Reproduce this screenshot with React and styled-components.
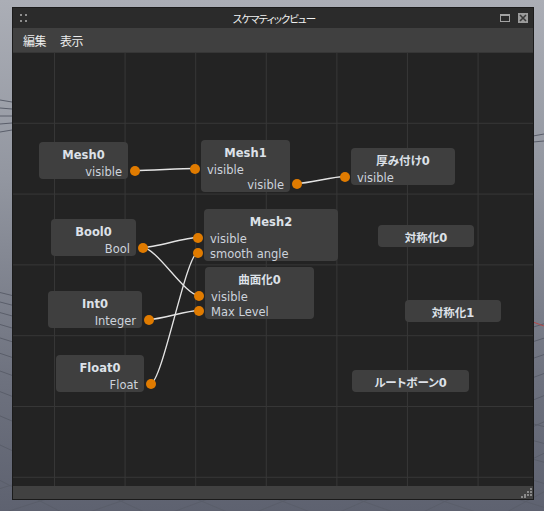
import React from 'react';
import styled, { createGlobalStyle } from 'styled-components';

const GlobalStyle = createGlobalStyle`
  html, body {
    margin: 0;
    padding: 0;
    background: #7d818c;
  }
  body {
    font-family: "DejaVu Sans", "Noto Sans CJK JP", sans-serif;
    font-feature-settings: "palt";
  }
`;

const Stage = styled.div`
  position: relative;
  width: 544px;
  height: 511px;
  overflow: hidden;
  box-sizing: border-box;
  padding: 7px 0 0 12px;
  background: linear-gradient(#abaeb6 0%, #9296a0 35%, #6d717e 75%, #5e6270 100%);
`;

const Backdrop = styled.svg`
  position: absolute;
  inset: 0;
  width: 544px;
  height: 511px;
`;

const Window = styled.div`
  position: relative;
  width: 522px;
  height: 493px;
  box-sizing: border-box;
  border: 1px solid #1b1b1b;
  display: flex;
  flex-direction: column;
  background: #2a2a2a;
`;

const TitleBar = styled.div`
  height: 20px;
  flex: none;
  display: grid;
  grid-template-columns: 1fr auto 1fr;
  align-items: center;
  padding: 0 5px 0 7px;
  background: #2b2b2b;
  color: #f2f2f2;
  font-family: "Noto Sans CJK JP", sans-serif;
  font-size: 10.5px;
`;

const Grip = styled.div`
  display: grid;
  grid-template-columns: 2px 2px;
  gap: 4px 3px;
  & > span {
    width: 2px;
    height: 2px;
    background: #8e8e8e;
  }
`;

const TitleText = styled.div`
  letter-spacing: -1px;
`;

const WinButtons = styled.div`
  justify-self: end;
  display: flex;
  align-items: center;
  gap: 8px;
`;

const MaxButton = styled.div`
  width: 10px;
  height: 8px;
  box-sizing: border-box;
  border: 1px solid #a3a3a3;
  border-top-width: 2px;
`;

const CloseButton = styled.div`
  width: 10px;
  height: 10px;
  background: #9b9b9b;
  display: flex;
  align-items: center;
  justify-content: center;
`;

const MenuBar = styled.div`
  height: 24px;
  flex: none;
  display: flex;
  align-items: center;
  gap: 14px;
  padding-left: 10px;
  background: #404040;
  color: #ececec;
  font-family: "Noto Sans CJK JP", sans-serif;
  font-size: 12px;
`;

const MenuItem = styled.span`
  letter-spacing: -0.5px;
`;

const Canvas = styled.div`
  position: relative;
  flex: 1;
  overflow: hidden;
  background-color: #232323;
  background-image:
    linear-gradient(to right, #363636 1px, transparent 1px),
    linear-gradient(to bottom, #363636 1px, transparent 1px);
  background-size: 70.6px 70.8px;
  background-position: 41px 0px;
`;

const Wires = styled.svg`
  position: absolute;
  inset: 0;
  width: 100%;
  height: 100%;
`;

const Node = styled.div`
  position: absolute;
  box-sizing: border-box;
  padding: 3px 0 1px;
  border-radius: 4px;
  background: #3f3f3f;
`;

const NodeTitle = styled.div`
  height: 18px;
  line-height: 20px;
  text-align: center;
  font-size: 11.5px;
  font-weight: 700;
  color: #dde1e8;
  white-space: nowrap;
`;

const Row = styled.div`
  position: relative;
  height: 15px;
  line-height: 19px;
  padding: 0 6px;
  font-size: 11.5px;
  color: #cdd3dc;
  white-space: nowrap;
  text-align: ${(p) => (p.$side === 'out' ? 'right' : 'left')};
`;

const Port = styled.span`
  position: absolute;
  top: 50%;
  margin-top: -5px;
  width: 10px;
  height: 10px;
  border-radius: 50%;
  background: #e07b00;
  ${(p) => (p.$side === 'out' ? 'right: -11.5px;' : 'left: -11px;')}
`;

const StatusBar = styled.div`
  height: 12px;
  flex: none;
  display: flex;
  justify-content: flex-end;
  align-items: flex-end;
  background: #414141;
  padding: 0 1px 1px 0;
`;

const nodes = [
  { id: 'mesh0', title: 'Mesh0', x: 26, y: 90, w: 89, rows: [['out', 'visible']] },
  { id: 'mesh1', title: 'Mesh1', x: 188, y: 88, w: 89, rows: [['in', 'visible'], ['out', 'visible']] },
  { id: 'atsumi', title: '厚み付け0', x: 338, y: 96, w: 104, rows: [['in', 'visible']] },
  { id: 'bool0', title: 'Bool0', x: 38, y: 167, w: 85, rows: [['out', 'Bool']] },
  { id: 'mesh2', title: 'Mesh2', x: 191, y: 157, w: 134, rows: [['in', 'visible'], ['in', 'smooth angle']] },
  { id: 'taisho0', title: '対称化0', x: 365, y: 173, w: 96, rows: [] },
  { id: 'kyokumen', title: '曲面化0', x: 192, y: 215, w: 109, rows: [['in', 'visible'], ['in', 'Max Level']] },
  { id: 'int0', title: 'Int0', x: 35, y: 239, w: 94, rows: [['out', 'Integer']] },
  { id: 'taisho1', title: '対称化1', x: 392, y: 248, w: 96, rows: [] },
  { id: 'float0', title: 'Float0', x: 43, y: 303, w: 88, rows: [['out', 'Float']] },
  { id: 'root', title: 'ルートボーン0', x: 339, y: 318, w: 117, rows: [] },
];

const links = [
  ['mesh0', 0, 'mesh1', 0],
  ['mesh1', 1, 'atsumi', 0],
  ['bool0', 0, 'mesh2', 0],
  ['bool0', 0, 'kyokumen', 0],
  ['int0', 0, 'kyokumen', 1],
  ['float0', 0, 'mesh2', 1],
];

const byId = Object.fromEntries(nodes.map((n) => [n.id, n]));

function portPos(id, row) {
  const n = byId[id];
  const side = n.rows[row][0];
  return {
    x: side === 'out' ? n.x + n.w + 6.5 : n.x - 6,
    y: n.y + 3 + 18 + 15 * row + 7.5,
  };
}

function wirePath([a, ai, b, bi]) {
  const p = portPos(a, ai);
  const q = portPos(b, bi);
  const h = Math.abs(q.x - p.x) * 0.25;
  return `M${p.x} ${p.y} C${p.x + h} ${p.y} ${q.x - h} ${q.y} ${q.x} ${q.y}`;
}

function Floor() {
  const lines = [];
  const vl = [-700, 120];
  const vr = [1250, 110];
  for (let i = 0; i < 12; i++) {
    const bx = -300 + i * 110;
    lines.push(<line key={'l' + i} x1={vl[0]} y1={vl[1]} x2={bx + 500} y2={640} />);
    lines.push(<line key={'r' + i} x1={vr[0]} y1={vr[1]} x2={bx - 200} y2={640} />);
  }
  return (
    <Backdrop viewBox="0 0 544 511">
      <g stroke="#5a5e6a" strokeWidth="1" fill="none">
        {lines}
        <path d="M0 100L12 102M0 108L12 109M0 116L12 116M0 124L12 123M0 132L12 130M533 136L544 134M533 142L544 141" />
      </g>
      <line x1="533" y1="322" x2="544" y2="326" stroke="#b04848" strokeWidth="1" />
    </Backdrop>
  );
}

export default function App() {
  return (
    <Stage>
      <GlobalStyle />
      <Floor />
      <Window>
        <TitleBar>
          <Grip>
            <span />
            <span />
            <span />
            <span />
          </Grip>
          <TitleText>スケマティックビュー</TitleText>
          <WinButtons>
            <MaxButton />
            <CloseButton>
              <svg width="8" height="8" viewBox="0 0 8 8">
                <path d="M1 1L7 7M7 1L1 7" stroke="#3a3a3a" strokeWidth="1.6" />
              </svg>
            </CloseButton>
          </WinButtons>
        </TitleBar>
        <MenuBar>
          <MenuItem>編集</MenuItem>
          <MenuItem>表示</MenuItem>
        </MenuBar>
        <Canvas>
          <Wires>
            {links.map((l, i) => (
              <path key={i} d={wirePath(l)} stroke="#e4e4e4" strokeWidth="1.3" fill="none" />
            ))}
          </Wires>
          {nodes.map((n) => (
            <Node key={n.id} style={{ left: n.x, top: n.y, width: n.w }}>
              <NodeTitle>{n.title}</NodeTitle>
              {n.rows.map(([side, label], i) => (
                <Row key={i} $side={side}>
                  {label}
                  <Port $side={side} />
                </Row>
              ))}
            </Node>
          ))}
        </Canvas>
        <StatusBar>
          <svg width="11" height="11" viewBox="0 0 11 11">
            <g fill="#8a8a8a">
              <rect x="9" y="1" width="2" height="2" />
              <rect x="6" y="4" width="2" height="2" />
              <rect x="9" y="4" width="2" height="2" />
              <rect x="3" y="7" width="2" height="2" />
              <rect x="6" y="7" width="2" height="2" />
              <rect x="9" y="7" width="2" height="2" />
              <rect x="0" y="9" width="2" height="2" />
              <rect x="3" y="9" width="2" height="2" />
            </g>
          </svg>
        </StatusBar>
      </Window>
    </Stage>
  );
}
